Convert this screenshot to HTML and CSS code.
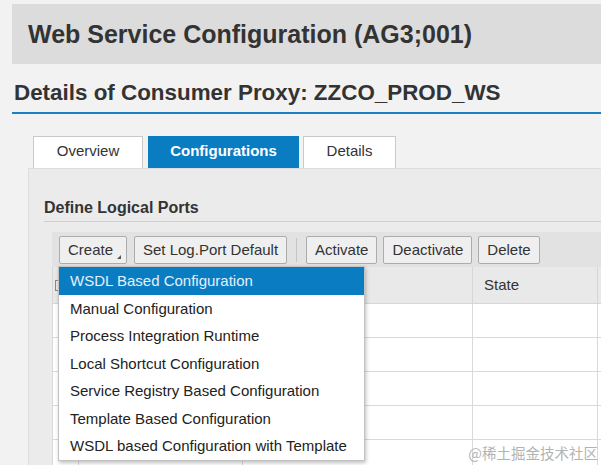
FILE: index.html
```html
<!DOCTYPE html>
<html lang="en">
<head>
    <meta charset="UTF-8">
    <title>Web Service Configuration</title>
    <link rel="stylesheet" href="styles.css">
</head>
<body>
    <div class="page">
        <!-- Application title bar -->
        <div class="page-title">Web Service Configuration (AG3;001)</div>

        <h2 class="proxy-title">Details of Consumer Proxy: ZZCO_PROD_WS</h2>

        <!-- Tabs -->
        <div class="tabs">
            <span class="tab tab-overview">Overview</span>
            <span class="tab tab-config active">Configurations</span>
            <span class="tab tab-details">Details</span>
        </div>

        <div class="panel">
            <h3 class="section-title">Define Logical Ports</h3>

            <div class="grid-area">
                <div class="toolbar">
                    <button class="btn btn-menu">Create<span class="caret"></span></button>
                    <button class="btn">Set Log.Port Default</button>
                    <span class="separator"></span>
                    <button class="btn">Activate</button>
                    <button class="btn">Deactivate</button>
                    <button class="btn">Delete</button>
                </div>

                <table class="ports">
                    <colgroup>
                        <col class="col-sel">
                        <col class="col-name">
                        <col class="col-desc">
                        <col class="col-state">
                        <col class="col-more">
                    </colgroup>
                    <thead>
                        <tr>
                            <th><span class="select-all"></span></th>
                            <th></th>
                            <th></th>
                            <th>State</th>
                            <th></th>
                        </tr>
                    </thead>
                    <tbody>
                        <tr><td></td><td></td><td></td><td></td><td></td></tr>
                        <tr><td></td><td></td><td></td><td></td><td></td></tr>
                        <tr><td></td><td></td><td></td><td></td><td></td></tr>
                        <tr><td></td><td></td><td></td><td></td><td></td></tr>
                        <tr><td></td><td></td><td></td><td></td><td></td></tr>
                    </tbody>
                </table>

                <!-- Create menu (opened) -->
                <ul class="menu">
                    <li class="selected">WSDL Based Configuration</li>
                    <li>Manual Configuration</li>
                    <li>Process Integration Runtime</li>
                    <li>Local Shortcut Configuration</li>
                    <li>Service Registry Based Configuration</li>
                    <li>Template Based Configuration</li>
                    <li>WSDL based Configuration with Template</li>
                </ul>
            </div>
        </div>

        <span class="watermark">@稀土掘金技术社区</span>
    </div>
</body>
</html>
```

FILE: styles.css
```css
html, body {
    margin: 0;
    height: 465px;
    overflow: hidden;
}
body {
    background-color: #f2f2f2;
    font-family: "Liberation Sans", Arial, sans-serif;
    color: #333;
}
.page {
    position: relative;
    height: 465px;
    padding-left: 12px;
    overflow: hidden;
}
.page-title {
    margin-top: 4px;
    height: 60px;
    line-height: 60px;
    padding-left: 16px;
    background-color: #dcdcdc;
    font-size: 25px;
    font-weight: bold;
    color: #333;
}
.proxy-title {
    margin: 17px 0 0;
    padding: 0 0 7px 2px;
    font-size: 22.4px;
    line-height: 24px;
    font-weight: bold;
    color: #333;
    border-bottom: 2px solid #1b7fc1;
}
.tabs {
    display: flex;
    margin: 22px 0 0 21px;
}
.tab {
    box-sizing: border-box;
    height: 32px;
    line-height: 28px;
    margin-right: 5px;
    text-align: center;
    font-size: 15px;
    color: #333;
    background-color: #fff;
    border: 1px solid #c9c9c9;
    border-bottom: none;
}
.tab-overview { width: 110px; }
.tab-config { width: 151px; margin-right: 4px; }
.tab-details { width: 93px; }
.tab.active {
    background-color: #0a7cc1;
    border-color: #0a7cc1;
    color: #fff;
    font-weight: bold;
}
.panel {
    margin-left: 16px;
    height: 300px;
    padding: 29px 0 0 15px;
    background-color: #ebebeb;
    border-left: 1px solid #dedede;
    border-top: 1px solid #dedede;
}
.section-title {
    margin: 0;
    padding-bottom: 3px;
    font-size: 16px;
    line-height: 20px;
    font-weight: bold;
    color: #333;
    border-bottom: 1px solid #cfcfcf;
}
.grid-area {
    position: relative;
    margin: 10px 0 0 8px;
}
.toolbar {
    display: flex;
    align-items: center;
    gap: 6px;
    height: 35px;
    padding: 0 7px;
    background-color: #e2e2e2;
}
.btn {
    position: relative;
    height: 28px;
    padding: 0 8px;
    font-family: inherit;
    font-size: 15px;
    color: #333;
    background-color: #efefef;
    border: 1px solid #acacac;
    border-radius: 2px;
}
.btn-menu {
    width: 68px;
    margin-right: 1px;
    text-align: left;
}
.caret {
    position: absolute;
    right: 5px;
    bottom: 4px;
    width: 0;
    height: 0;
    border-left: 4px solid transparent;
    border-bottom: 4px solid #555;
}
.separator {
    width: 1px;
    height: 24px;
    margin: 0 3px;
    background-color: #c4c4c4;
}
.ports {
    table-layout: fixed;
    width: 680px;
    border-collapse: collapse;
    font-size: 15px;
    border-left: 1px solid #d6d6d6;
}
.col-sel { width: 26px; }
.col-name { width: 164px; }
.col-desc { width: 230px; }
.col-state { width: 125px; }
.ports th {
    box-sizing: border-box;
    height: 36px;
    padding: 0 0 0 11px;
    text-align: left;
    font-weight: normal;
    color: #333;
    background-color: #e9e9e9;
    border: 1px solid #d6d6d6;
    border-top: none;
}
.ports th:first-child {
    padding-left: 2px;
}
.ports td {
    box-sizing: border-box;
    height: 34px;
    padding: 0;
    background-color: #fff;
    border: 1px solid #d9d9d9;
}
.select-all {
    display: inline-block;
    width: 3px;
    height: 9px;
    margin-top: 4px;
    border: 1px solid #888;
    border-right: none;
}
.menu {
    position: absolute;
    left: 6px;
    top: 34px;
    width: 305px;
    margin: 0;
    padding: 0;
    list-style: none;
    background-color: #fff;
    border: 1px solid #c2c2c2;
    box-shadow: 1px 2px 4px rgba(0, 0, 0, 0.25);
}
.menu li {
    height: 27.5px;
    line-height: 28px;
    padding-left: 11px;
    font-size: 15px;
    color: #222;
    white-space: nowrap;
}
.menu li.selected {
    background-color: #0a7cc1;
    color: #e3f1fb;
}
.watermark {
    position: absolute;
    right: 3px;
    bottom: 3px;
    font-family: "Noto Sans CJK SC", sans-serif;
    font-size: 14.5px;
    line-height: 18px;
    color: #b3b3b3;
}
```
